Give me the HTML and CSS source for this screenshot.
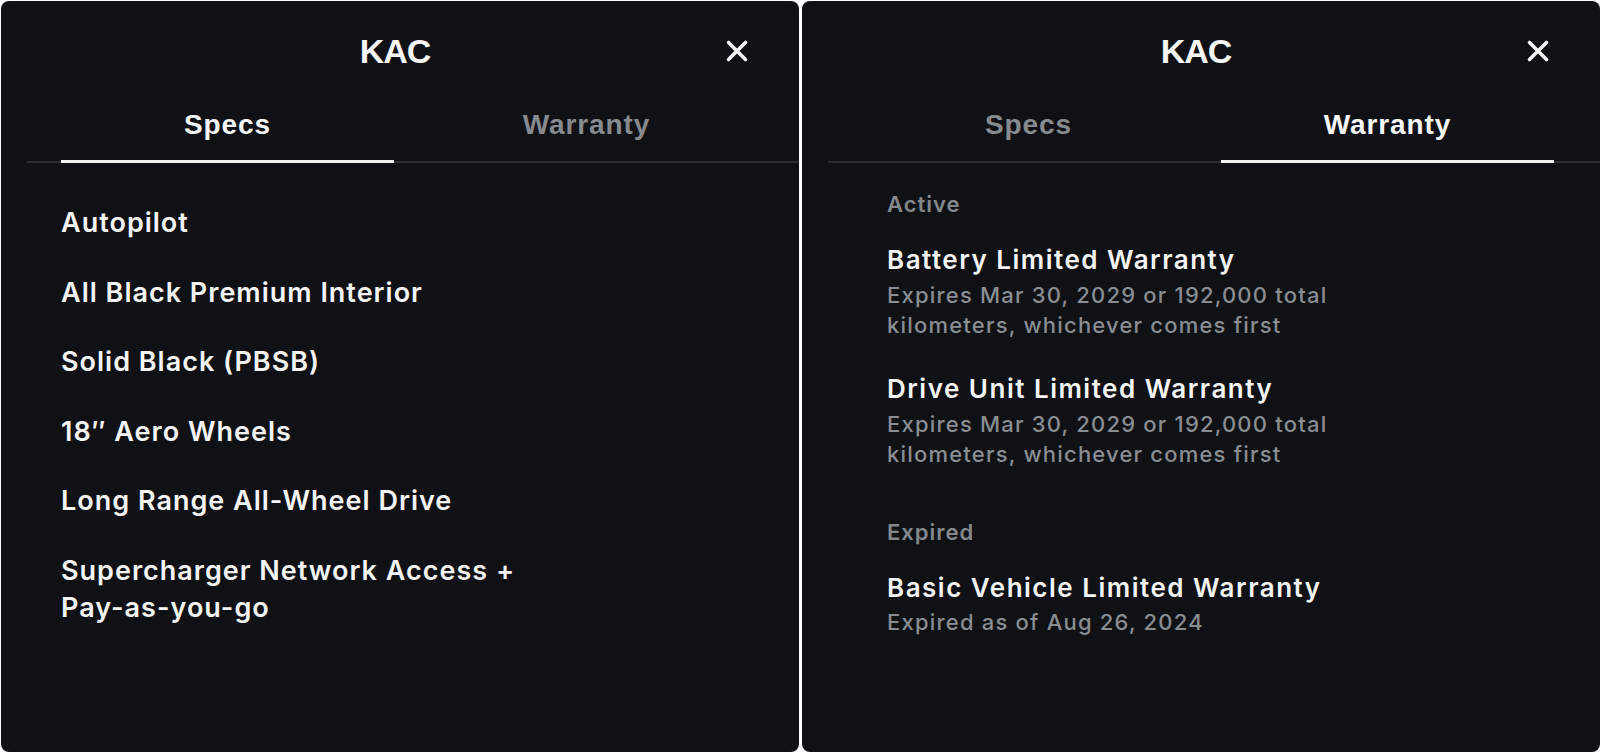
FILE: index.html
```html
<!DOCTYPE html>
<html lang="en">
<head>
<meta charset="utf-8">
<title>KAC</title>
<link rel="stylesheet" href="styles.css">
</head>
<body>
<div class="screen">
  <section class="panel">
    <header class="panel-header">
      <span class="spacer"></span>
      <h1 class="title">KAC</h1>
      <button class="close" aria-label="Close">
        <svg viewBox="0 0 24 24" width="24" height="24"><path d="M3.5 3.5 L20.5 20.5 M20.5 3.5 L3.5 20.5" stroke="#f4f4f4" stroke-width="3.6" stroke-linecap="round" fill="none"/></svg>
      </button>
    </header>
    <nav class="tabs-wrap">
      <div class="tabs">
        <button class="tab active">Specs</button>
        <button class="tab">Warranty</button>
      </div>
    </nav>
    <ul class="spec-list">
      <li>Autopilot</li>
      <li>All Black Premium Interior</li>
      <li>Solid Black (PBSB)</li>
      <li>18″ Aero Wheels</li>
      <li>Long Range All-Wheel Drive</li>
      <li>Supercharger Network Access + Pay-as-you-go</li>
    </ul>
  </section>

  <section class="panel">
    <header class="panel-header">
      <span class="spacer"></span>
      <h1 class="title">KAC</h1>
      <button class="close" aria-label="Close">
        <svg viewBox="0 0 24 24" width="24" height="24"><path d="M3.5 3.5 L20.5 20.5 M20.5 3.5 L3.5 20.5" stroke="#f4f4f4" stroke-width="3.6" stroke-linecap="round" fill="none"/></svg>
      </button>
    </header>
    <nav class="tabs-wrap">
      <div class="tabs">
        <button class="tab">Specs</button>
        <button class="tab active">Warranty</button>
      </div>
    </nav>
    <div class="warranty">
      <div class="w-section">
        <h2 class="w-heading">Active</h2>
        <div class="w-item">
          <div class="w-title">Battery Limited Warranty</div>
          <div class="w-sub">Expires Mar 30, 2029 or 192,000 total kilometers, whichever comes first</div>
        </div>
        <div class="w-item">
          <div class="w-title">Drive Unit Limited Warranty</div>
          <div class="w-sub">Expires Mar 30, 2029 or 192,000 total kilometers, whichever comes first</div>
        </div>
      </div>
      <div class="w-section">
        <h2 class="w-heading">Expired</h2>
        <div class="w-item">
          <div class="w-title">Basic Vehicle Limited Warranty</div>
          <div class="w-sub">Expired as of Aug 26, 2024</div>
        </div>
      </div>
    </div>
  </section>
</div>
</body>
</html>
```

FILE: styles.css
```css
* { box-sizing: border-box; }

html, body {
  margin: 0;
  padding: 0;
  background: #ffffff;
}

body {
  font-family: "Inter", "Liberation Sans", sans-serif;
  color: #f4f4f4;
}

.screen {
  display: flex;
  gap: 3px;
  padding: 1px 0 0 1px;
  width: 1600px;
  height: 754px;
}

.panel {
  width: 798px;
  height: 751px;
  background: #0f1115;
  border-radius: 8px;
  display: flex;
  flex-direction: column;
  overflow: hidden;
}

.panel-header {
  display: grid;
  grid-template-columns: 1fr auto 1fr;
  align-items: center;
  height: 48px;
  margin-top: 26px;
  padding: 0 50px 0 40px;
}

.title {
  margin: 0;
  font-family: "Liberation Sans", Arial, sans-serif;
  font-weight: 700;
  font-size: 34px;
  line-height: 48px;
  letter-spacing: -1px;
  color: #f6f6f6;
}

.close {
  justify-self: end;
  width: 24px;
  height: 24px;
  padding: 0;
  border: 0;
  background: none;
  display: flex;
}

.tabs-wrap {
  margin-left: 26px;
  border-bottom: 2px solid #2a2d32;
}

.tabs {
  display: grid;
  grid-template-columns: 1fr 1fr;
  column-gap: 26px;
  padding: 0 46px 0 34px;
}

.tab {
  font-family: "Liberation Sans", Arial, sans-serif;
  font-weight: 700;
  font-size: 28px;
  line-height: 40px;
  letter-spacing: 0.9px;
  color: #878a8f;
  background: none;
  border: 0;
  border-bottom: 3px solid transparent;
  padding: 30px 0 15px;
  margin-bottom: -2px;
  text-align: center;
}

.tab.active {
  color: #f6f6f6;
  border-bottom-color: #f2f2f2;
}

.spec-list {
  list-style: none;
  margin: 0;
  padding: 41px 0 0 60px;
  display: flex;
  flex-direction: column;
  gap: 32.5px;
}

.spec-list li {
  max-width: 500px;
  font-size: 27px;
  line-height: 37px;
  font-weight: 600;
  letter-spacing: 1px;
  color: #f4f4f4;
}

.warranty {
  padding: 26px 0 0 85px;
  display: flex;
  flex-direction: column;
  gap: 48px;
}

.w-section {
  display: flex;
  flex-direction: column;
  gap: 32.5px;
}

.w-heading {
  margin: 0 0 -8.5px;
  font-size: 22px;
  line-height: 30px;
  font-weight: 600;
  letter-spacing: 1px;
  color: #84878c;
}

.w-item {
  display: flex;
  flex-direction: column;
  gap: 2.5px;
  max-width: 520px;
}

.w-title {
  font-size: 26px;
  line-height: 34px;
  font-weight: 600;
  letter-spacing: 1.5px;
  color: #f4f4f4;
}

.w-sub {
  font-size: 22px;
  line-height: 30px;
  font-weight: 500;
  letter-spacing: 1.2px;
  color: #8a8d92;
}
```
